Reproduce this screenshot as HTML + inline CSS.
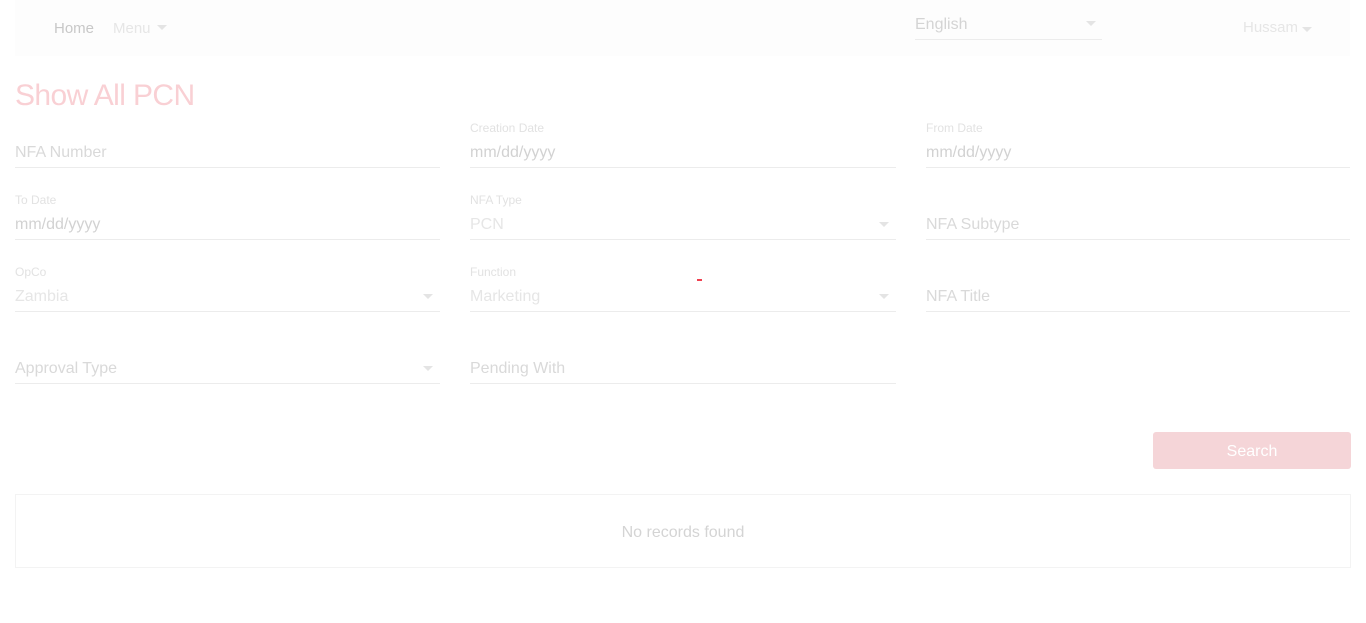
<!DOCTYPE html>
<html><head><meta charset="utf-8"><style>
body{margin:0;width:1366px;height:623px;background:#fff;font-family:"Liberation Sans",sans-serif;position:relative;overflow:hidden}
.a{position:absolute}
.nav{left:15px;top:0;width:1335px;height:56px;background:#fdfdfd}
.lbl{font-size:12px;color:#e2e2e2}
.in{font-size:16px;color:#d9d9d9}
.ln{height:1px;background:#ececec}
.car{width:0;height:0;border-left:5px solid transparent;border-right:5px solid transparent;border-top:5px solid #e4e4e4}
</style></head><body>
<div class="a nav"></div>
<div class="a" style="left:54px;top:20px;font-size:15px;color:#c8c8c8">Home</div>
<div class="a" style="left:113px;top:20px;font-size:15px;color:#e6e6e6">Menu</div>
<div class="a car" style="left:157px;top:25px"></div>
<div class="a in" style="left:915px;top:16px;color:#d4d4d4">English</div>
<div class="a car" style="left:1086px;top:21px"></div>
<div class="a ln" style="left:915px;top:39px;width:187px"></div>
<div class="a" style="left:1243px;top:19px;font-size:15px;color:#e6e6e6">Hussam</div>
<div class="a car" style="left:1302px;top:27px"></div>
<div class="a" style="left:15px;top:79px;font-size:30px;color:#f9d0d4;letter-spacing:-0.6px">Show All PCN</div>

<div class="a in" style="left:15px;top:144px">NFA Number</div>
<div class="a ln" style="left:15px;top:167px;width:425px"></div>
<div class="a lbl" style="left:470px;top:121px">Creation Date</div>
<div class="a in" style="left:470px;top:144px;color:#d2d2d2">mm/dd/yyyy</div>
<div class="a ln" style="left:470px;top:167px;width:426px"></div>
<div class="a lbl" style="left:926px;top:121px">From Date</div>
<div class="a in" style="left:926px;top:144px;color:#d2d2d2">mm/dd/yyyy</div>
<div class="a ln" style="left:926px;top:167px;width:424px"></div>

<div class="a lbl" style="left:15px;top:193px">To Date</div>
<div class="a in" style="left:15px;top:216px;color:#d2d2d2">mm/dd/yyyy</div>
<div class="a ln" style="left:15px;top:239px;width:425px"></div>
<div class="a lbl" style="left:470px;top:193px">NFA Type</div>
<div class="a in" style="left:470px;top:216px;color:#e6e6e6">PCN</div>
<div class="a car" style="left:879px;top:222px"></div>
<div class="a ln" style="left:470px;top:239px;width:426px"></div>
<div class="a in" style="left:926px;top:216px">NFA Subtype</div>
<div class="a ln" style="left:926px;top:239px;width:424px"></div>

<div class="a lbl" style="left:15px;top:265px">OpCo</div>
<div class="a in" style="left:15px;top:288px;color:#e6e6e6">Zambia</div>
<div class="a car" style="left:423px;top:294px"></div>
<div class="a ln" style="left:15px;top:311px;width:425px"></div>
<div class="a lbl" style="left:470px;top:265px">Function</div>
<div class="a in" style="left:470px;top:288px;color:#e6e6e6">Marketing</div>
<div class="a" style="left:697px;top:279px;width:5px;height:2px;background:#f04050"></div>
<div class="a car" style="left:879px;top:294px"></div>
<div class="a ln" style="left:470px;top:311px;width:426px"></div>
<div class="a in" style="left:926px;top:288px">NFA Title</div>
<div class="a ln" style="left:926px;top:311px;width:424px"></div>

<div class="a in" style="left:15px;top:360px">Approval Type</div>
<div class="a car" style="left:423px;top:366px"></div>
<div class="a ln" style="left:15px;top:383px;width:425px"></div>
<div class="a in" style="left:470px;top:360px">Pending With</div>
<div class="a ln" style="left:470px;top:383px;width:426px"></div>

<div class="a" style="left:1153px;top:432px;width:198px;height:37px;background:#f5d5d8;border-radius:3px;color:#fff;font-size:16px;text-align:center;line-height:39px">Search</div>
<div class="a" style="left:15px;top:494px;width:1334px;height:72px;border:1px solid #f3f3f3"></div>
<div class="a" style="left:0;width:1366px;top:524px;text-align:center;font-size:16px;color:#d4d4d4">No records found</div>
</body></html>
